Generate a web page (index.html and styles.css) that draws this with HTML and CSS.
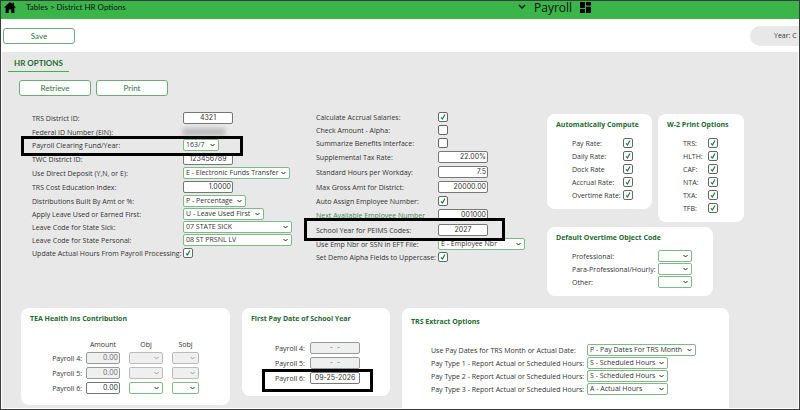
FILE: index.html
```html
<!DOCTYPE html>
<html lang="en">
<head>
    <meta charset="UTF-8">
    <title>District HR Options</title>
    <link rel="stylesheet" href="styles.css">
</head>
<body>
<header class="topbar">
    <div class="crumbs">
        <a href="#" class="home" aria-label="Home">
            <svg width="12" height="11" viewBox="0 0 12 11"><path d="M6 0L0 5.6h1.6V11h3.1V7.4h2.6V11h3.1V5.6H12L9.9 3.6V.8H8.3v1.3z"/></svg>
        </a>
        <span>Tables &gt; District HR Options</span>
    </div>
    <div class="app">
        <svg width="8" height="6" viewBox="0 0 8 6"><path d="M1 1l3 3 3-3" fill="none" stroke="#111" stroke-width="1.4"/></svg>
        <span class="app-name">Payroll</span>
        <svg width="11" height="11" viewBox="0 0 11 11"><path d="M0 0h5v6H0zM6 0h5v3.6H6zM0 7h5v4H0zM6 4.8h5V11H6z"/></svg>
    </div>
</header>
<div class="toolbar">
    <button class="btn">Save</button>
    <div class="year">Year: C</div>
</div>
<main>
    <nav><a href="#" class="tab">HR OPTIONS</a></nav>
    <div class="actions">
        <button class="btn">Retrieve</button>
        <button class="btn">Print</button>
    </div>

    <div class="options">
        <div class="column district">
            <div class="row tall"><label for="trs_id">TRS District ID:</label><input type="text" id="trs_id" class="center" value="4321"></div>
            <div class="row"><span class="label">Federal ID Number (EIN):</span><span class="masked"></span></div>
            <div class="row marked"><label for="fund">Payroll Clearing Fund/Year:</label><select id="fund" class="w-fund"><option>163/7</option></select></div>
            <div class="row tall"><label for="twc_id">TWC District ID:</label><input type="text" id="twc_id" class="center" value="123456789"></div>
            <div class="row"><label for="deposit">Use Direct Deposit (Y,N, or E):</label><select id="deposit" class="w-deposit"><option>E - Electronic Funds Transfer</option></select></div>
            <div class="row tall"><label for="cost_index">TRS Cost Education Index:</label><input type="text" id="cost_index" value="1.0000"></div>
            <div class="row"><label for="dist">Distributions Built By Amt or %:</label><select id="dist" class="w-dist"><option>P - Percentage</option></select></div>
            <div class="row"><label for="leave">Apply Leave Used or Earned First:</label><select id="leave" class="w-leave"><option>U - Leave Used First</option></select></div>
            <div class="row"><label for="sick">Leave Code for State Sick:</label><select id="sick" class="w-code"><option>07 STATE SICK</option></select></div>
            <div class="row"><label for="personal">Leave Code for State Personal:</label><select id="personal" class="w-code"><option>08 ST PRSNL LV</option></select></div>
            <div class="row"><label for="update_hours">Update Actual Hours From Payroll Processing:</label><input type="checkbox" id="update_hours" checked></div>
        </div>

        <div class="column payroll">
            <div class="row"><label for="accrual">Calculate Accrual Salaries:</label><input type="checkbox" id="accrual" checked></div>
            <div class="row"><label for="check_alpha">Check Amount - Alpha:</label><input type="checkbox" id="check_alpha"></div>
            <div class="row"><label for="benefits">Summarize Benefits Interface:</label><input type="checkbox" id="benefits"></div>
            <div class="row tall"><label for="tax">Supplemental Tax Rate:</label><input type="text" id="tax" value="22.00%"></div>
            <div class="row tall"><label for="hours">Standard Hours per Workday:</label><input type="text" id="hours" value="7.5"></div>
            <div class="row tall"><label for="gross">Max Gross Amt for District:</label><input type="text" id="gross" value="20000.00"></div>
            <div class="row"><label for="auto_emp">Auto Assign Employee Number:</label><input type="checkbox" id="auto_emp" checked></div>
            <div class="row tall"><label for="next_emp"><a href="#">Next Available Employee Number</a></label><input type="text" id="next_emp" value="001000"></div>
            <div class="row tall marked"><label for="peims">School Year for PEIMS Codes:</label><input type="text" id="peims" class="center" value="2027"></div>
            <div class="row"><label for="eft">Use Emp Nbr or SSN in EFT File:</label><select id="eft" class="w-eft"><option>E - Employee Nbr</option></select></div>
            <div class="row"><label for="upper">Set Demo Alpha Fields to Uppercase:</label><input type="checkbox" id="upper" checked></div>
        </div>

        <div class="side">
            <div class="side-top">
                <section class="card compute">
                    <h2>Automatically Compute</h2>
                    <div class="row"><label for="pay">Pay Rate:</label><input type="checkbox" id="pay" checked></div>
                    <div class="row"><label for="daily">Daily Rate:</label><input type="checkbox" id="daily" checked></div>
                    <div class="row"><label for="dock">Dock Rate</label><input type="checkbox" id="dock" checked></div>
                    <div class="row"><label for="accr">Accrual Rate:</label><input type="checkbox" id="accr" checked></div>
                    <div class="row"><label for="over">Overtime Rate:</label><input type="checkbox" id="over" checked></div>
                </section>
                <section class="card w2">
                    <h2>W-2 Print Options</h2>
                    <div class="row"><label for="trs">TRS:</label><input type="checkbox" id="trs" checked></div>
                    <div class="row"><label for="hlth">HLTH:</label><input type="checkbox" id="hlth" checked></div>
                    <div class="row"><label for="caf">CAF:</label><input type="checkbox" id="caf" checked></div>
                    <div class="row"><label for="nta">NTA:</label><input type="checkbox" id="nta" checked></div>
                    <div class="row"><label for="txa">TXA:</label><input type="checkbox" id="txa" checked></div>
                    <div class="row"><label for="tfb">TFB:</label><input type="checkbox" id="tfb" checked></div>
                </section>
            </div>
            <section class="card overtime">
                <h2>Default Overtime Object Code</h2>
                <div class="row"><label for="prof">Professional:</label><select id="prof" class="w-obj"><option></option></select></div>
                <div class="row"><label for="para">Para-Professional/Hourly:</label><select id="para" class="w-obj"><option></option></select></div>
                <div class="row"><label for="other">Other:</label><select id="other" class="w-obj"><option></option></select></div>
            </section>
        </div>
    </div>

    <div class="lower">
        <section class="card tea">
            <h2>TEA Health Ins Contribution</h2>
            <table>
                <thead>
                <tr><td></td><th scope="col">Amount</th><th scope="col">Obj</th><th scope="col">Sobj</th></tr>
                </thead>
                <tbody>
                <tr>
                    <th scope="row"><label for="amt4">Payroll 4:</label></th>
                    <td><input type="text" id="amt4" class="w-amount" value="0.00" disabled></td>
                    <td><select class="w-obj" aria-label="Payroll 4 Obj" disabled><option></option></select></td>
                    <td><select class="w-sobj" aria-label="Payroll 4 Sobj" disabled><option></option></select></td>
                </tr>
                <tr>
                    <th scope="row"><label for="amt5">Payroll 5:</label></th>
                    <td><input type="text" id="amt5" class="w-amount" value="0.00" disabled></td>
                    <td><select class="w-obj" aria-label="Payroll 5 Obj" disabled><option></option></select></td>
                    <td><select class="w-sobj" aria-label="Payroll 5 Sobj" disabled><option></option></select></td>
                </tr>
                <tr>
                    <th scope="row"><label for="amt6">Payroll 6:</label></th>
                    <td><input type="text" id="amt6" class="w-amount" value="0.00"></td>
                    <td><select class="w-obj" aria-label="Payroll 6 Obj"><option></option></select></td>
                    <td><select class="w-sobj" aria-label="Payroll 6 Sobj"><option></option></select></td>
                </tr>
                </tbody>
            </table>
        </section>
        <section class="card paydate">
            <h2>First Pay Date of School Year</h2>
            <div class="row tall"><label for="date4">Payroll 4:</label><input type="text" id="date4" class="center" value="-  -" disabled></div>
            <div class="row tall"><label for="date5">Payroll 5:</label><input type="text" id="date5" class="center" value="-  -" disabled></div>
            <div class="row tall marked"><label for="date6">Payroll 6:</label><input type="text" id="date6" class="center" value="09-25-2026"></div>
        </section>
        <section class="card extract">
            <h2>TRS Extract Options</h2>
            <div class="row"><label for="dates">Use Pay Dates for TRS Month or Actual Date:</label><select id="dates" class="w-dates"><option>P - Pay Dates For TRS Month</option></select></div>
            <div class="row"><label for="type1">Pay Type 1 - Report Actual or Scheduled Hours:</label><select id="type1" class="w-leave"><option>S - Scheduled Hours</option></select></div>
            <div class="row"><label for="type2">Pay Type 2 - Report Actual or Scheduled Hours:</label><select id="type2" class="w-leave"><option>S - Scheduled Hours</option></select></div>
            <div class="row"><label for="type3">Pay Type 3 - Report Actual or Scheduled Hours:</label><select id="type3" class="w-leave"><option>A - Actual Hours</option></select></div>
        </section>
    </div>
</main>
</body>
</html>
```
FILE: styles.css
```css
* {
    box-sizing: border-box;
}

body {
    margin: 0;
    height: 100vh;
    display: flex;
    flex-direction: column;
    overflow: hidden;
    border: 1px solid #3c3c3c;
    background: #fff;
    color: #333;
    font: 7px/11px "Open Sans", sans-serif;
}

.topbar {
    display: grid;
    grid-template-columns: 2fr 1fr;
    flex: none;
    height: 18px;
    background: #39b54a;
    color: #111;
    font-family: Lato, sans-serif;
    font-size: 8px;
}

.crumbs,
.app {
    display: flex;
    align-items: center;
    height: 12px;
}

.crumbs {
    gap: 10px;
    padding-left: 3px;
}

.home {
    display: flex;
}

.app {
    gap: 8px;
    margin-left: -15px;
}

.app-name {
    font-family: "Open Sans", sans-serif;
    font-size: 12px;
}

.toolbar {
    display: flex;
    justify-content: space-between;
    align-items: center;
    flex: none;
    height: 33px;
    padding-left: 2px;
}

.btn {
    width: 72px;
    height: 16px;
    padding: 0;
    border: 1px solid #6fa97a;
    border-radius: 3px;
    background: #fff;
    color: #2e7540;
    font: 8px/12px Lato, sans-serif;
}

.year {
    width: 49px;
    height: 20px;
    padding-left: 24px;
    border-radius: 10px 0 0 10px;
    background: #e8e8e8;
    line-height: 20px;
    white-space: nowrap;
}

main {
    flex: 1;
    min-height: 0;
    margin: 0 1px 1px;
    overflow: hidden;
    background: #e8e8e8;
}

nav {
    display: flex;
    padding: 6px 6px 0;
}

.tab {
    padding: 0 6px 2px;
    border-bottom: 1px solid #39b54a;
    color: #1d6b31;
    font-family: Lato, sans-serif;
    font-size: 8px;
    font-weight: 700;
    text-decoration: none;
}

.actions {
    display: flex;
    gap: 5px;
    padding: 8px 17px 0;
}

.options {
    display: grid;
    grid-template-columns: 284px 231px 1fr;
    padding: 14px 0 0 30px;
}

.row {
    position: relative;
    display: flex;
    align-items: center;
    height: 13px;
}

.row.tall {
    height: 15px;
}

label,
.label {
    padding-top: 2px;
    white-space: nowrap;
}

.row > label,
.row > .label {
    flex: none;
    width: 151px;
}

.payroll .row > label {
    width: 122px;
}

label a {
    color: #3f8a50;
    text-decoration: none;
}

input[type="text"] {
    width: 50px;
    height: 12px;
    padding: 0 1px;
    border: 1px solid #777;
    border-radius: 2px;
    background: #fff;
    color: #333;
    font: 7px/10px Inter, sans-serif;
    text-align: right;
}

input[type="text"].center {
    text-align: center;
}

select {
    appearance: none;
    height: 12px;
    padding: 0 2px;
    border: 1px solid #7dba86;
    border-radius: 2px;
    background: #fff url("data:image/svg+xml,%3Csvg xmlns='http://www.w3.org/2000/svg' width='5' height='4'%3E%3Cpath d='M.5 1l2 2 2-2' fill='none' stroke='%23222'/%3E%3C/svg%3E") no-repeat right 3px center;
    color: #333;
    font: inherit;
    line-height: 10px;
}

input[type="text"]:disabled,
select:disabled {
    border-color: #bbb;
    background-color: #eef0f0;
    color: #777;
    opacity: 1;
}

input[type="text"]:disabled {
    border-color: #999;
}

select:disabled {
    background-image: url("data:image/svg+xml,%3Csvg xmlns='http://www.w3.org/2000/svg' width='5' height='4'%3E%3Cpath d='M.5 1l2 2 2-2' fill='none' stroke='%23999'/%3E%3C/svg%3E");
}

input[type="checkbox"] {
    appearance: none;
    width: 10px;
    height: 10px;
    margin: 0;
    border: 1px solid #666;
    border-radius: 2px;
    background: #fff;
}

input[type="checkbox"]:checked {
    background: #fff url("data:image/svg+xml,%3Csvg xmlns='http://www.w3.org/2000/svg' width='8' height='8'%3E%3Cpath d='M2 4.4l1.4 1.6L6 1.5' fill='none' stroke='%2315803a' stroke-width='1.2'/%3E%3C/svg%3E") no-repeat center;
}

.w-fund { width: 36px; }
.w-deposit { width: 107px; }
.w-dist { width: 63px; }
.w-leave { width: 81px; }
.w-code { width: 109px; }
.w-eft { width: 87px; }
.w-obj { width: 34px; }
.w-sobj { width: 27px; }
.w-dates { width: 109px; }

input[type="text"].w-amount {
    width: 34px;
}

.masked {
    width: 42px;
    height: 8px;
    background: #bdbdbd;
    filter: blur(2px);
}

/* call-out frames round the fields to check */
.marked::after {
    content: "";
    position: absolute;
    z-index: 1;
    border: 3px solid #000;
    pointer-events: none;
}

.district .marked::after {
    inset: -2px 73px -5px -11px;
}

.payroll .marked::after {
    inset: -4px 42px -4px -12px;
}

.card {
    border-radius: 8px;
    background: #fff;
}

h2 {
    margin: 0;
    color: #1d6b31;
    font-size: 7px;
    font-weight: 700;
    line-height: 12px;
    white-space: nowrap;
}

.side {
    display: flex;
    flex-direction: column;
    align-items: flex-start;
    gap: 5px;
    padding-top: 4px;
}

.side-top {
    display: flex;
    align-items: flex-start;
    gap: 6px;
}

.side .card {
    padding: 5px 9px 8px;
}

.side .row {
    padding-left: 16px;
}

.side h2 {
    margin-bottom: 5px;
}

.compute {
    width: 105px;
}

.w2 {
    width: 86px;
}

.compute .row > label {
    width: 51px;
}

.w2 .row > label {
    width: 25px;
}

.side .overtime {
    width: 166px;
}

.overtime .row > label {
    width: 86px;
}

.lower {
    display: flex;
    align-items: flex-start;
    gap: 12px;
    padding: 12px 19px 0;
}

.lower .card {
    flex: none;
    padding: 5px 9px 0;
}

.lower .tea {
    width: 209px;
    padding-bottom: 10px;
}

table {
    margin: 14px 0 0 18px;
    border-collapse: collapse;
}

td,
th {
    height: 15px;
    padding: 0 9px 0 0;
    font-weight: 400;
    line-height: 11px;
    vertical-align: middle;
}

thead td,
thead th {
    height: 11px;
}

tbody th {
    width: 38px;
    padding-right: 4px;
    text-align: right;
}

tbody label,
td input,
td select {
    display: block;
}

.lower .paydate {
    width: 148px;
    padding-bottom: 11px;
}

.paydate h2 {
    margin-bottom: 15px;
}

.paydate .row {
    margin-left: 24px;
}

.paydate .row > label {
    width: 35px;
}

.paydate .marked::after {
    inset: -1px 8px -7px -13px;
}

.lower .extract {
    width: 327px;
    height: 120px;
    padding-top: 8px;
}

.extract h2 {
    margin-bottom: 15px;
}

.extract .row {
    margin-left: 20px;
}

.extract .row > label {
    width: 156px;
}
```
